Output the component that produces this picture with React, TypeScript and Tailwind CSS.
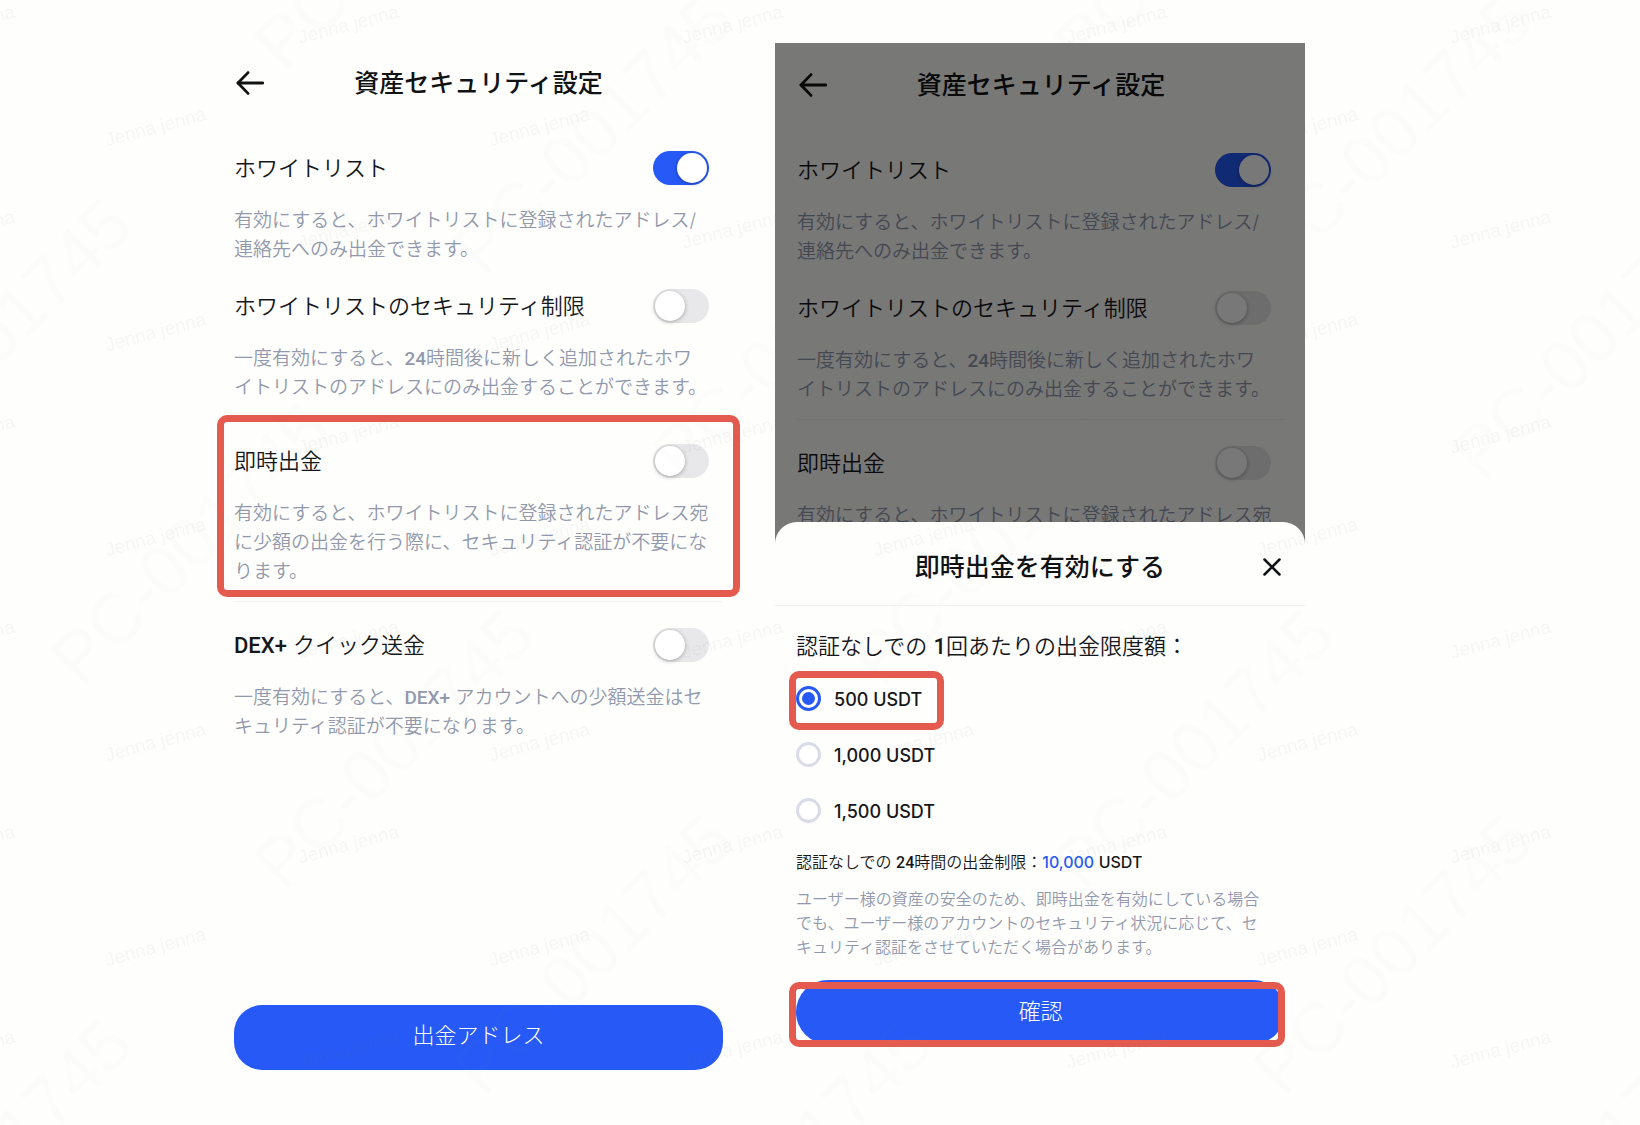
import React, { useState } from "react";

type SettingProps = {
  id: string;
  title: React.ReactNode;
  lines: React.ReactNode[];
  on?: boolean;
};

function Latin({ children }: { children: React.ReactNode }) {
  return <span className="font-['Roboto',sans-serif] font-medium">{children}</span>;
}

function Setting({ id, title, lines, on = false }: SettingProps) {
  return (
    <div>
      <div className="flex h-[34px] items-center justify-between pr-3.5">
        <label htmlFor={id} className="text-[22px] leading-[34px] whitespace-nowrap text-[#16171a]">
          {title}
        </label>
        <input
          id={id}
          type="checkbox"
          role="switch"
          defaultChecked={on}
          className="relative h-[34px] w-14 shrink-0 appearance-none rounded-full bg-[#e8e8ea] before:absolute before:top-0.5 before:left-0.5 before:size-[30px] before:rounded-full before:bg-white before:shadow-[0_1px_4px_rgba(0,0,0,0.3)] checked:bg-[#2659f6] checked:before:left-6"
        />
      </div>
      <p className="mt-[21px] text-[19px] leading-[29px] whitespace-nowrap text-[#9299ac]">
        {lines.map((line, i) => (
          <span key={i} className="block">
            {line}
          </span>
        ))}
      </p>
    </div>
  );
}

function Divider() {
  return <hr className="mt-[15px] mb-[26px] border-t border-[#f1f1f3]" />;
}

function Highlight({ className }: { className: string }) {
  return (
    <span
      aria-hidden="true"
      className={`pointer-events-none absolute rounded-[10px] border-[7px] border-[#e45a4e] ${className}`}
    />
  );
}

function ScreenHeader() {
  return (
    <header className="relative flex h-10 items-center justify-center pt-0.5">
      <button type="button" aria-label="戻る" className="absolute top-[9px] left-0.5 flex h-6 w-7 items-center">
        <svg viewBox="0 0 28 24" className="h-6 w-7" fill="none" stroke="#111214" strokeWidth="2.8" strokeLinecap="round">
          <path d="M2 12H26.7" />
          <path d="M12 1.6 2 12 12 22.4" strokeLinejoin="round" />
        </svg>
      </button>
      <h1 className="text-[25px] leading-10 font-medium whitespace-nowrap text-[#111214]">資産セキュリティ設定</h1>
    </header>
  );
}

function WhitelistSettings({ prefix }: { prefix: string }) {
  return (
    <div className="mt-[49px] flex flex-col gap-[25px]">
      <Setting
        id={`${prefix}-whitelist`}
        title="ホワイトリスト"
        on
        lines={["有効にすると、ホワイトリストに登録されたアドレス/", "連絡先へのみ出金できます。"]}
      />
      <Setting
        id={`${prefix}-limit`}
        title="ホワイトリストのセキュリティ制限"
        lines={[
          <>
            一度有効にすると、<Latin>24</Latin>時間後に新しく追加されたホワ
          </>,
          "イトリストのアドレスにのみ出金することができます。",
        ]}
      />
    </div>
  );
}

function InstantSetting({ prefix }: { prefix: string }) {
  return (
    <Setting
      id={`${prefix}-instant`}
      title="即時出金"
      lines={[
        "有効にすると、ホワイトリストに登録されたアドレス宛",
        "に少額の出金を行う際に、セキュリティ認証が不要にな",
        "ります。",
      ]}
    />
  );
}

const amounts = ["500 USDT", "1,000 USDT", "1,500 USDT"];

function ConfirmSheet() {
  const [amount, setAmount] = useState(amounts[0]);
  return (
    <div role="dialog" aria-labelledby="sheet-title" className="relative -mt-[21px] rounded-t-[22px] bg-[#fefefd]">
      <div className="relative flex h-21 items-center justify-center border-b border-[#f1f1f3] pt-1.5">
        <h2 id="sheet-title" className="text-[25px] leading-10 font-medium whitespace-nowrap text-[#111214]">
          即時出金を有効にする
        </h2>
        <button type="button" aria-label="閉じる" className="absolute top-9 right-6 size-[18px]">
          <svg viewBox="0 0 18 18" className="size-[18px]" fill="none" stroke="#111214" strokeWidth="2.5" strokeLinecap="round">
            <path d="M1.5 1.5 16.5 16.5M16.5 1.5 1.5 16.5" />
          </svg>
        </button>
      </div>
      <div className="pr-5 pl-[21px] text-[#16171a]">
        <fieldset>
          <legend className="pt-[25px] text-[22px] leading-[30px] whitespace-nowrap">
            認証なしでの <Latin>1</Latin>回あたりの出金限度額：
          </legend>
          <div className="mt-2 flex flex-col items-start">
            {amounts.map((value) => (
              <label key={value} className="relative flex h-14 items-center gap-[13px] whitespace-nowrap">
                <input
                  type="radio"
                  name="amount"
                  value={value}
                  checked={amount === value}
                  onChange={() => setAmount(value)}
                  className="relative size-[25px] appearance-none rounded-full border-[3px] border-[#d9dce8] bg-white before:absolute before:top-[3px] before:left-[3px] before:size-[13px] before:rounded-full checked:border-[#2659f6] checked:before:bg-[#2659f6]"
                />
                <span className="pt-1 font-['Inter',sans-serif] text-lg font-medium">{value}</span>
                {value === amounts[0] && <Highlight className="top-px -right-[22px] -bottom-1 -left-[7px]" />}
              </label>
            ))}
          </div>
        </fieldset>
        <p className="mt-3 text-base leading-6 whitespace-nowrap">
          認証なしでの <Latin>24</Latin>時間の出金制限：
          <span className="font-medium text-[#2659f6]">10,000</span> <span className="font-medium">USDT</span>
        </p>
        <p className="mt-3 text-base leading-6 whitespace-nowrap text-[#9299ac]">
          ユーザー様の資産の安全のため、即時出金を有効にしている場合
          <br />
          でも、ユーザー様のアカウントのセキュリティ状況に応じて、セ
          <br />
          キュリティ認証をさせていただく場合があります。
        </p>
        <div className="relative mt-[21px]">
          <button type="button" className="h-16 w-full rounded-full bg-[#2659f6] pb-0.5 text-[22px] font-light text-white">
            確認
          </button>
          <Highlight className="top-0.5 right-0 -bottom-[3px] -left-[7px]" />
        </div>
      </div>
    </div>
  );
}

const names = Array.from({ length: 12 }, (_, row) =>
  Array.from({ length: 6 }, (_, col) => ({
    x: (row % 2 === 0 ? -84 : -277) + col * 384,
    y: 44 + row * 102.5,
  })),
).flat();

const codes = Array.from({ length: 8 }, (_, row) =>
  Array.from({ length: 4 }, (_, col) => ({
    x: 280 + ((row % 4) - 4) * 199 + col * 800,
    y: 73 + row * 205,
  })),
).flat();

function Watermark() {
  return (
    <svg aria-hidden="true" className="pointer-events-none absolute inset-0 h-full w-full font-['Liberation_Sans',sans-serif]">
      <g fill="#808080" fillOpacity="0.08" fontSize="19">
        {names.map(({ x, y }) => (
          <text key={`${x},${y}`} transform={`translate(${x} ${y}) rotate(-15)`}>
            Jenna jenna
          </text>
        ))}
      </g>
      <g fill="#808080" fillOpacity="0.018" fontSize="71">
        {codes.map(({ x, y }) => (
          <text key={`${x},${y}`} transform={`translate(${x} ${y}) rotate(-45)`}>
            PC-001745
          </text>
        ))}
      </g>
    </svg>
  );
}

export default function App() {
  return (
    <main
      lang="ja"
      className="relative grid min-h-screen grid-cols-[234fr_489fr_52fr_530fr_335fr] overflow-hidden bg-[#fefefd] font-['Inter','Noto_Sans_CJK_JP',sans-serif] font-[350]"
    >
      <section className="col-start-2 flex min-w-0 flex-col pt-[62px] pb-[55px]">
        <ScreenHeader />
        <WhitelistSettings prefix="main" />
        <Divider />
        <div className="relative">
          <InstantSetting prefix="main" />
          <Highlight className="-top-[29px] -right-[17px] -bottom-[11px] -left-[17px]" />
        </div>
        <Divider />
        <Setting
          id="main-dex"
          title={
            <>
              <Latin>DEX+</Latin> クイック送金
            </>
          }
          lines={[
            <>
              一度有効にすると、<Latin>DEX+</Latin> アカウントへの少額送金はセ
            </>,
            "キュリティ認証が不要になります。",
          ]}
        />
        <button
          type="button"
          className="mt-auto h-[65px] w-full rounded-[28px] bg-[#2659f6] pb-1 text-[22px] font-light text-white"
        >
          出金アドレス
        </button>
      </section>

      <section className="col-start-4 min-w-0 pt-[43px]">
        <div className="relative h-[500px] overflow-hidden pt-[21px] pr-5 pl-[22px]">
          <ScreenHeader />
          <WhitelistSettings prefix="back" />
          <Divider />
          <InstantSetting prefix="back" />
          <div className="absolute inset-0 bg-black/53" />
        </div>
        <ConfirmSheet />
      </section>

      <Watermark />
    </main>
  );
}
